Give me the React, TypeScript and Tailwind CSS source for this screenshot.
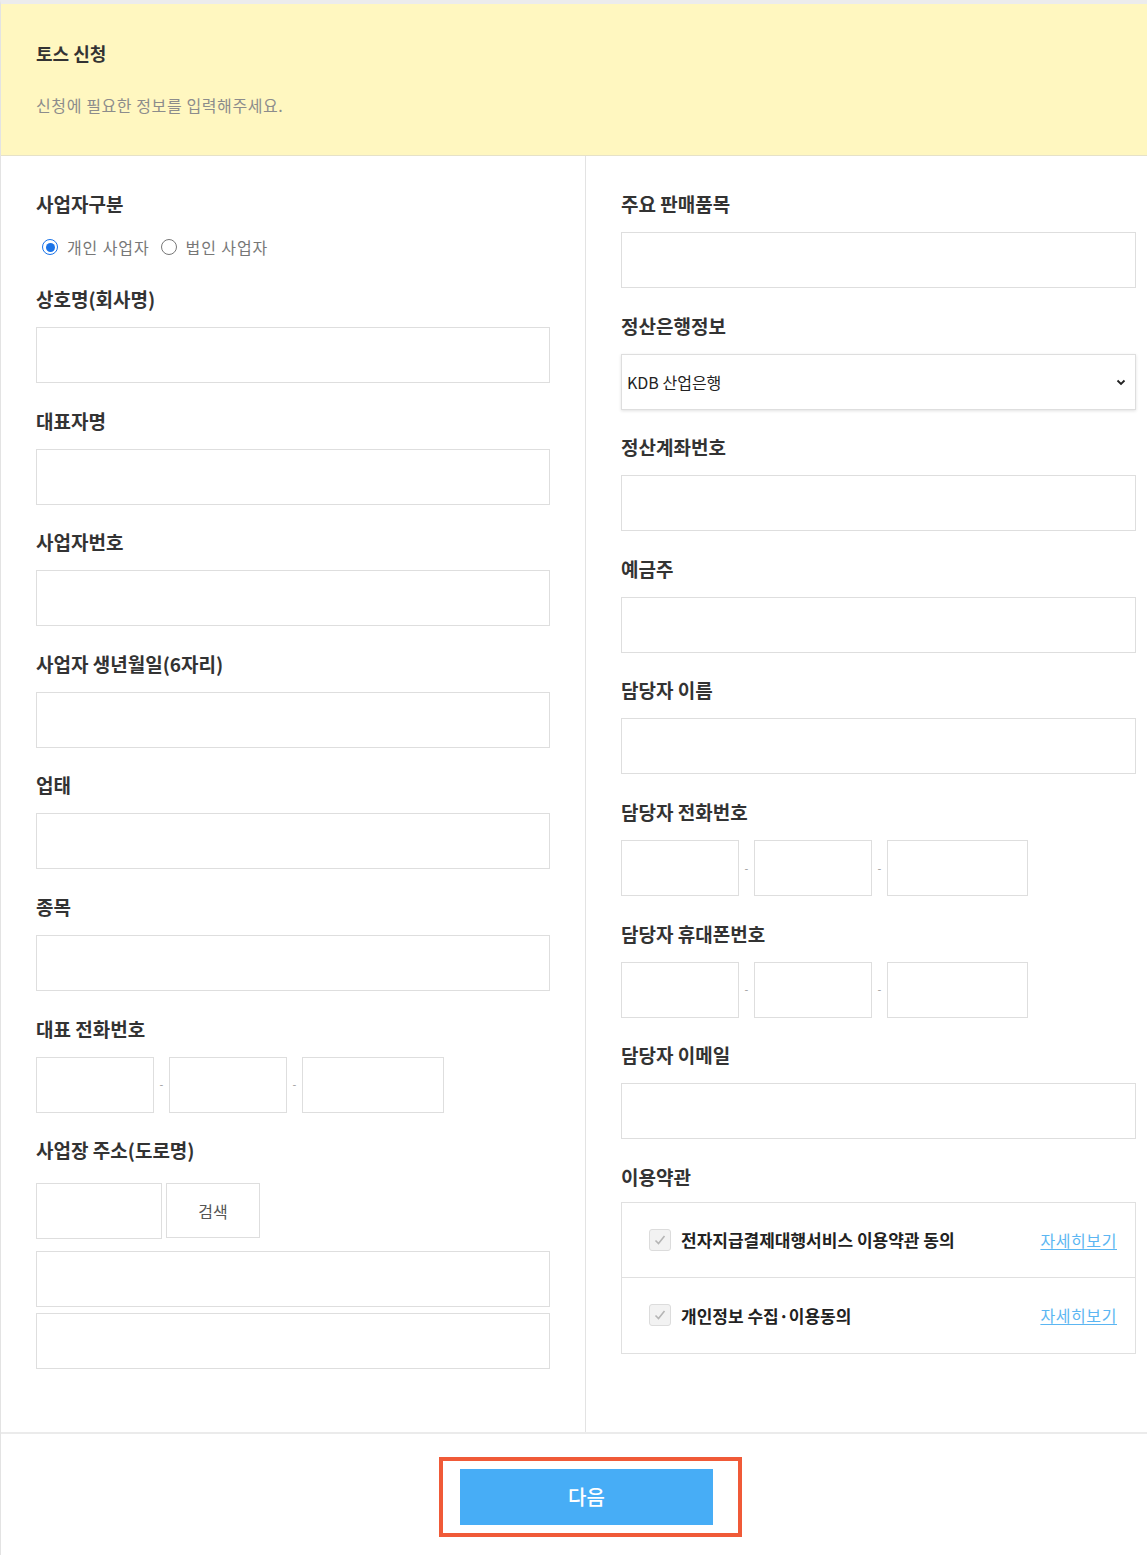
import type { ReactNode } from "react";

const font = { fontFamily: '"Noto Sans CJK KR", "Noto Sans", sans-serif' };

function Field({ label, children, className }: { label: string; children: ReactNode; className?: string }) {
  return (
    <div className={className ?? "mb-[25.6px]"}>
      <div className="text-[19px] leading-[24px] font-semibold text-[#333] mb-[16px]">{label}</div>
      {children}
    </div>
  );
}

function Input({ className }: { className?: string }) {
  return <input className={"block h-[56px] border border-[#dedede] bg-white outline-none " + (className ?? "w-full")} />;
}

function Phone({ widths }: { widths: [string, string, string] }) {
  return (
    <div className="flex items-center">
      <Input className={widths[0]} />
      <span className="w-[15px] text-center text-[11px] text-[#999]">-</span>
      <Input className={widths[1]} />
      <span className="w-[15px] text-center text-[11px] text-[#999]">-</span>
      <Input className={widths[2]} />
    </div>
  );
}

function Radio({ checked, label }: { checked?: boolean; label: string }) {
  return (
    <label className="flex items-center gap-[9px] mr-[11px]">
      <span
        className={
          "w-[16px] h-[16px] rounded-full flex items-center justify-center border-[1.5px] " +
          (checked ? "border-[#1a73e8]" : "border-[#777]")
        }
      >
        {checked && <span className="w-[9px] h-[9px] rounded-full bg-[#1a73e8]" />}
      </span>
      <span className="text-[16px] tracking-[0.9px] text-[#777]">{label}</span>
    </label>
  );
}

function TermRow({ label, last }: { label: string; last?: boolean }) {
  return (
    <div className={"flex items-center h-[75px] pl-[27px] pr-[18px] " + (last ? "" : "border-b border-[#e0e0e0]")}>
      <span className="w-[22px] h-[22px] rounded-[3px] border border-[#dcdcdc] bg-[#f2f2f2] flex items-center justify-center">
        <svg width="14" height="14" viewBox="0 0 14 14" fill="none">
          <path d="M2.5 7.5 L5.5 10.5 L11.5 3" stroke="#b5b5b5" strokeWidth="1.6" />
        </svg>
      </span>
      <span className="ml-[10px] text-[17px] font-bold text-[#222]">{label}</span>
      <a className="ml-auto text-[16px] tracking-[0.6px] text-[#5cb6f2] underline underline-offset-2">자세히보기</a>
    </div>
  );
}

export default function App() {
  return (
    <div style={font} className="w-[1147px] min-h-[1555px] bg-white border-t-[4px] border-[#ececec] border-l border-l-[#e3e3e3]">
      <div className="bg-[#fff7c0] h-[152px] border-b border-[#e6e2c8] pl-[35px] pt-[37px]">
        <div className="text-[18px] leading-[24px] font-bold text-[#333]">토스 신청</div>
        <div className="mt-[30px] text-[16px] leading-[20px] tracking-[0.6px] text-[#8c8c8c]">신청에 필요한 정보를 입력해주세요.</div>
      </div>

      <div className="flex border-b-2 border-[#ebebeb]">
        <div className="w-[585px] border-r border-[#e3e3e3] pl-[35px] pr-[35px] pt-[36px] pb-[63px]">
          <div className="text-[19px] leading-[24px] font-semibold text-[#333] mb-[21px]">사업자구분</div>
          <div className="flex items-center pl-[6px] mb-[30px] h-[20px]">
            <Radio checked label="개인 사업자" />
            <Radio label="법인 사업자" />
          </div>
          <Field label="상호명(회사명)"><Input /></Field>
          <Field label="대표자명"><Input /></Field>
          <Field label="사업자번호"><Input /></Field>
          <Field label="사업자 생년월일(6자리)"><Input /></Field>
          <Field label="업태"><Input /></Field>
          <Field label="종목"><Input /></Field>
          <Field label="대표 전화번호">
            <Phone widths={["w-[118px]", "w-[118px]", "w-[142px]"]} />
          </Field>
          <Field label="사업장 주소(도로명)" className="">
            <div className="flex gap-[4px] mt-[21px]">
              <Input className="w-[126px]" />
              <button className="h-[55px] w-[94px] border border-[#dedede] text-[16px] text-[#555]">검색</button>
            </div>
            <Input className="w-full mt-[12px]" />
            <Input className="w-full mt-[6px]" />
          </Field>
        </div>

        <div className="flex-1 pl-[35px] pr-[11px] pt-[36px]">
          <Field label="주요 판매품목"><Input /></Field>
          <Field label="정산은행정보">
            <div className="h-[56px] border border-[#dedede] shadow-[0_1px_3px_rgba(0,0,0,0.12)] flex items-center pl-[5px] pr-[8px]">
              <span className="text-[16px] text-[#222]">KDB 산업은행</span>
              <svg className="ml-auto" width="12" height="12" viewBox="0 0 12 12" fill="none">
                <path d="M2.5 4.5 L6 8 L9.5 4.5" stroke="#222" strokeWidth="1.8" />
              </svg>
            </div>
          </Field>
          <Field label="정산계좌번호"><Input /></Field>
          <Field label="예금주"><Input /></Field>
          <Field label="담당자 이름"><Input /></Field>
          <Field label="담당자 전화번호">
            <Phone widths={["w-[118px]", "w-[118px]", "w-[141px]"]} />
          </Field>
          <Field label="담당자 휴대폰번호">
            <Phone widths={["w-[118px]", "w-[118px]", "w-[141px]"]} />
          </Field>
          <Field label="담당자 이메일"><Input /></Field>
          <Field label="이용약관" className="">
            <div className="border border-[#e0e0e0] -mt-[3px]">
              <TermRow label="전자지급결제대행서비스 이용약관 동의" />
              <TermRow label="개인정보 수집·이용동의" last />
            </div>
          </Field>
        </div>
      </div>

      <div className="pl-[438px] pt-[23px]">
        <div className="w-[303px] border-[4px] border-[#f05a38] px-[17px] py-[8px]">
          <button className="w-[253px] h-[56px] bg-[#47adf6] text-white text-[20px] font-medium">다음</button>
        </div>
      </div>
    </div>
  );
}
